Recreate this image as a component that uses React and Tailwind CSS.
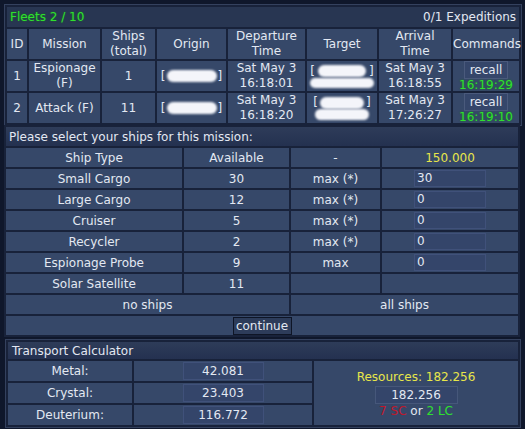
import React from "react";

function Pill({ cls }) {
  return <span className={"inline-block rounded-full bg-[#f4f5fa] blur-[1px] align-middle " + cls} />;
}

const td = "bg-[#364869] text-center align-middle p-0";
const hd = "bg-[#283652] p-0";

function FleetRow({ id, mission, ships, o1, t1, t2, dep, arr, time, h }) {
  return (
    <tr>
      <td className={td + " " + h}>{id}</td>
      <td className={td + " leading-[15px]"}>{mission}</td>
      <td className={td}>{ships}</td>
      <td className={td}>
        <span className="inline-flex items-center">
          [<Pill cls={o1} />]
        </span>
      </td>
      <td className={td + " leading-[15px]"}>
        Sat May 3<br />
        {dep}
      </td>
      <td className={td}>
        <div className="flex flex-col items-center leading-[13px]">
          <span className="inline-flex items-center">
            [<Pill cls={t1} />]
          </span>
          <Pill cls={t2} />
        </div>
      </td>
      <td className={td + " leading-[15px]"}>
        Sat May 3<br />
        {arr}
      </td>
      <td className={td}>
        <div className="flex flex-col items-center">
          <div className="w-[44px] h-[18px] border border-[#4a5a7c] bg-[#35466a] leading-[16px]">recall</div>
          <div className="text-[#2fe02f] leading-[12px] [text-shadow:0_0_2px_#1a7a1a]">{time}</div>
        </div>
      </td>
    </tr>
  );
}

function ShipRow({ name, avail, max, val }) {
  return (
    <tr>
      <td className={td + " h-[19px]"}>{name}</td>
      <td className={td}>{avail}</td>
      <td className={td}>{max}</td>
      <td className={td}>
        {val !== undefined && (
          <div className="mx-auto w-[72px] h-[17px] bg-[#34456a] border border-[#40517a] text-left pl-[2px] leading-[15px]">
            {val}
          </div>
        )}
      </td>
    </tr>
  );
}

function CalcRow({ label, val, first }) {
  return (
    <tr>
      <td className={td + " h-[20px]"}>{label}</td>
      <td className={td}>
        <div className="mx-auto w-[81px] h-[18px] bg-[#34456a] border border-[#40517a] leading-[16px]">{val}</div>
      </td>
      {first && (
        <td rowSpan={3} className={td}>
          <div className="flex flex-col items-center">
            <div className="text-[#e8e64a] leading-[16px]">Resources: 182.256</div>
            <div className="mt-[1px] w-[83px] h-[18px] bg-[#34456a] border border-[#46577a] leading-[16px]">182.256</div>
            <div className="leading-[14px]">
              <span className="text-[#c0182c]">7 SC</span> or <span className="text-[#2fe02f]">2 LC</span>
            </div>
          </div>
        </td>
      )}
    </tr>
  );
}

export default function App() {
  return (
    <div className="w-[525px] h-[429px] overflow-hidden bg-[#0f172b] text-[12px] text-[#e3e8f2] font-['DejaVu_Sans',Verdana,sans-serif] pt-[4px] pl-[4px]">
      <table className="w-[516px] table-fixed border-separate border-spacing-[2px] bg-[#18223a] border border-[#34415e]">
        <colgroup>
          <col className="w-[20px]" />
          <col className="w-[71px]" />
          <col className="w-[53px]" />
          <col className="w-[69px]" />
          <col className="w-[77px]" />
          <col className="w-[70px]" />
          <col className="w-[72px]" />
          <col className="w-[66px]" />
        </colgroup>
        <tbody>
          <tr>
            <td colSpan={8} className={hd + " h-[20px]"}>
              <div className="flex justify-between px-[3px]">
                <span className="text-[#2fe02f] [text-shadow:0_0_2px_#1a7a1a]">Fleets 2 / 10</span>
                <span>0/1 Expeditions</span>
              </div>
            </td>
          </tr>
          <tr className="leading-[15px]">
            <td className={td + " h-[28px]"}>ID</td>
            <td className={td}>Mission</td>
            <td className={td}>Ships<br />(total)</td>
            <td className={td}>Origin</td>
            <td className={td}>Departure<br />Time</td>
            <td className={td}>Target</td>
            <td className={td}>Arrival<br />Time</td>
            <td className={td}>Commands</td>
          </tr>
          <FleetRow
            id="1"
            mission="Espionage (F)"
            ships="1"
            o1="w-[50px] h-[12px] mx-[1px]"
            t1="w-[48px] h-[12px] mx-[3px]"
            t2="w-[64px] h-[10px]"
            dep="16:18:01"
            arr="16:18:55"
            time="16:19:29"
            h="h-[30px]"
          />
          <FleetRow
            id="2"
            mission="Attack (F)"
            ships="11"
            o1="w-[50px] h-[12px] mx-[1px]"
            t1="w-[44px] h-[12px] mx-[2px]"
            t2="w-[54px] h-[11px]"
            dep="16:18:20"
            arr="17:26:27"
            time="16:19:10"
            h="h-[30px]"
          />
        </tbody>
      </table>

      <table className="w-[516px] table-fixed border-separate border-spacing-[2px] bg-[#18223a] -mt-[1px]">
        <colgroup>
          <col className="w-[176px]" />
          <col className="w-[105px]" />
          <col className="w-[89px]" />
          <col className="w-[136px]" />
        </colgroup>
        <tbody>
          <tr>
            <td colSpan={4} className={hd + " h-[19px] text-left pl-[3px] bg-gradient-to-b from-[#2e3c59] to-[#243150]"}>
              Please select your ships for this mission:
            </td>
          </tr>
          <tr>
            <td className={td + " h-[19px]"}>Ship Type</td>
            <td className={td}>Available</td>
            <td className={td}>-</td>
            <td className={td + " text-[#e8e64a]"}>150.000</td>
          </tr>
          <ShipRow name="Small Cargo" avail="30" max="max (*)" val="30" />
          <ShipRow name="Large Cargo" avail="12" max="max (*)" val="0" />
          <ShipRow name="Cruiser" avail="5" max="max (*)" val="0" />
          <ShipRow name="Recycler" avail="2" max="max (*)" val="0" />
          <ShipRow name="Espionage Probe" avail="9" max="max" val="0" />
          <ShipRow name="Solar Satellite" avail="11" max="" />
          <tr>
            <td colSpan={2} className={td + " h-[19px]"}>no ships</td>
            <td colSpan={2} className={td}>all ships</td>
          </tr>
          <tr>
            <td colSpan={4} className={td + " h-[19px]"}>
              <div className="mx-auto w-[59px] h-[18px] bg-[#2d3c5a] border border-[#0e1526] leading-[16px]">continue</div>
            </td>
          </tr>
        </tbody>
      </table>

      <table className="w-[514px] ml-[1px] mt-[2px] table-fixed border-separate border-spacing-[2px] bg-[#18223a] border border-[#34415e]">
        <colgroup>
          <col className="w-[124px]" />
          <col className="w-[178px]" />
          <col className="w-[204px]" />
        </colgroup>
        <tbody>
          <tr>
            <td colSpan={3} className={hd + " h-[17px] text-left pl-[4px] bg-gradient-to-b from-[#2e3c59] to-[#243150] leading-[14px]"}>
              Transport Calculator
            </td>
          </tr>
          <CalcRow label="Metal:" val="42.081" first />
          <CalcRow label="Crystal:" val="23.403" />
          <CalcRow label="Deuterium:" val="116.772" />
        </tbody>
      </table>
    </div>
  );
}
